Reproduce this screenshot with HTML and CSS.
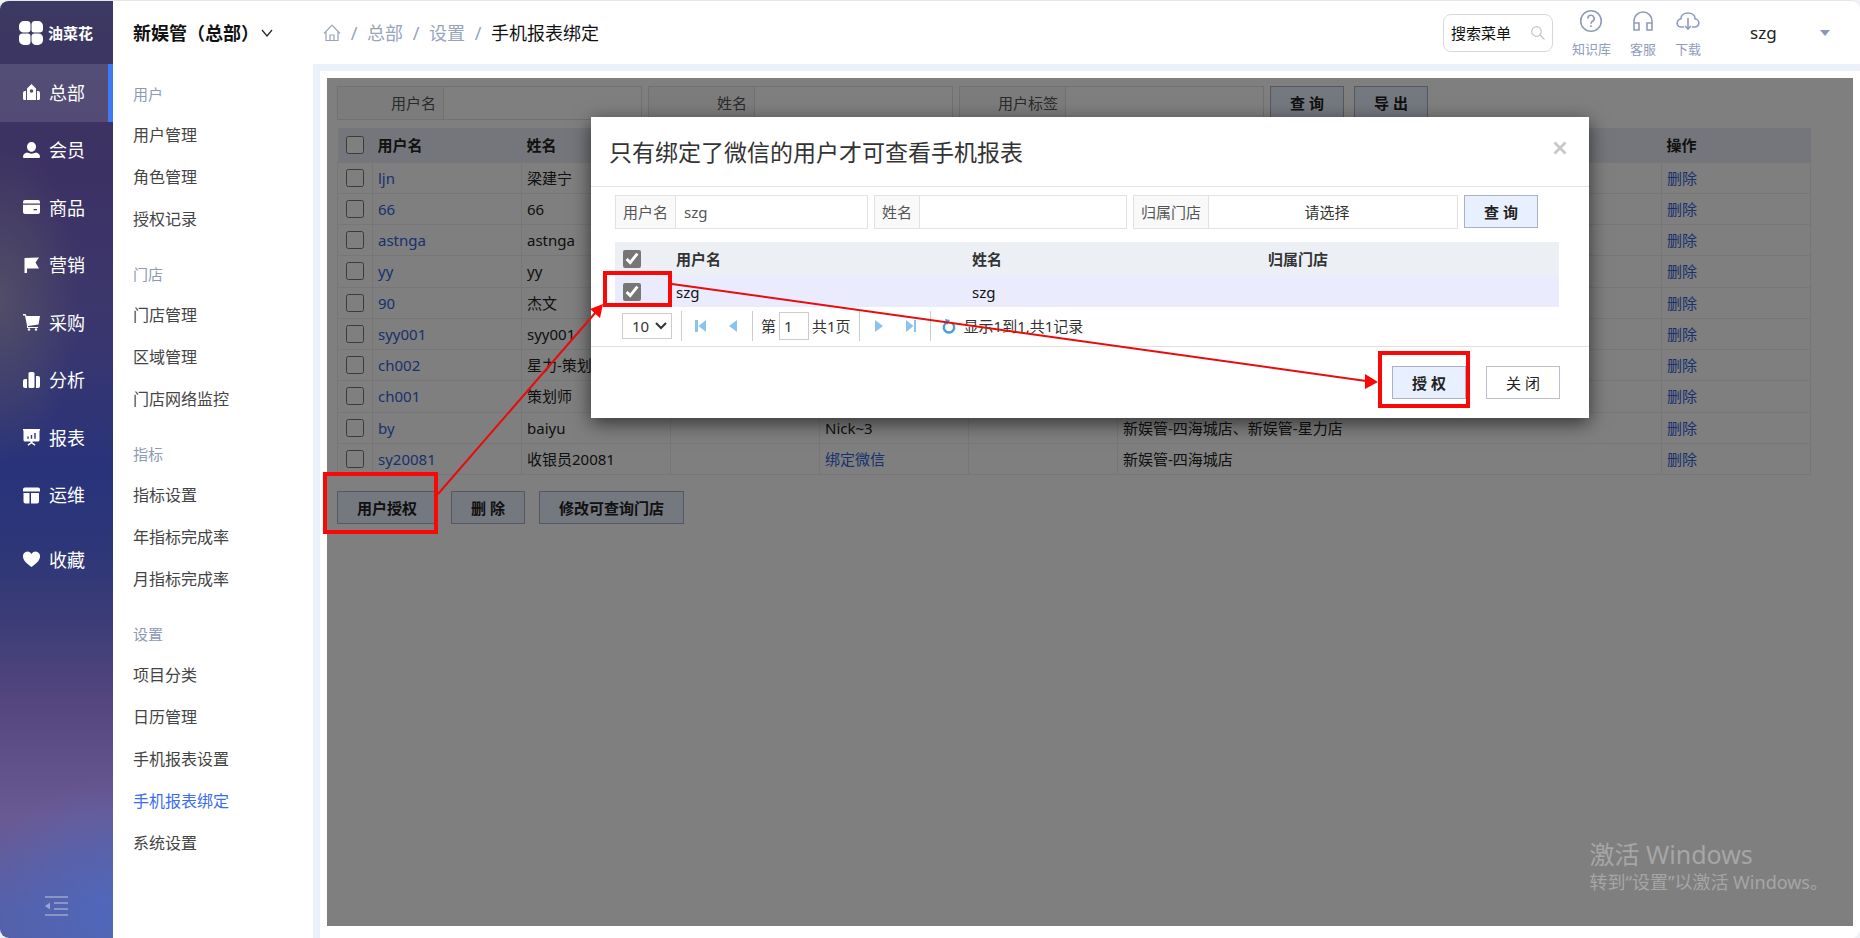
FILE: index.html
```html
<!DOCTYPE html>
<html lang="zh-CN">
<head>
<meta charset="utf-8">
<title>手机报表绑定</title>
<link rel="stylesheet" href="styles.css">
</head>
<body>
<div class="app">
  <aside class="rail">
    <div class="brand">
      <svg width="24" height="24" viewBox="0 0 24 24" fill="#fff"><path d="M5 0h4a3 3 0 0 1 2.500 3v5.500a3 3 0 0 1-3 3H4.500A4.500 4.500 0 0 1 0 7V5a5 5 0 0 1 5-5z"/><path d="M16 0h3a5 5 0 0 1 5 5v3a3.500 3.500 0 0 1-3.500 3.500H15a2.500 2.500 0 0 1-2.500-2.500V3.500A3.500 3.500 0 0 1 16 0z"/><path d="M3.500 12.500H9a2.500 2.500 0 0 1 2.500 2.500v5.500A3.500 3.500 0 0 1 8 24H5a5 5 0 0 1-5-5v-3a3.500 3.500 0 0 1 3.500-3.500z"/><path d="M15.500 12.500h4A4.500 4.500 0 0 1 24 17v2a5 5 0 0 1-5 5h-2a4.500 4.500 0 0 1-4.500-4.500v-4a3 3 0 0 1 3-3z"/></svg>
      <span>油菜花</span>
    </div>
    <nav class="rail-nav">
      <a class="rail-item active" href="#"><svg width="17" height="17" viewBox="0 0 17 17" fill="#fff"><path fill-rule="evenodd" d="M8.500 0 13 4.500V16H4V4.500zM8.500 5.200a1.800 1.800 0 1 0 0 3.600 1.800 1.800 0 0 0 0-3.600z"/><path d="M3 7v9H1.500A1.500 1.500 0 0 1 0 14.500V9a2 2 0 0 1 2-2zM14 7v9h1.500a1.500 1.500 0 0 0 1.500-1.500V9a2 2 0 0 0-2-2z"/></svg>总部</a>
      <a class="rail-item" href="#"><svg width="17" height="17" viewBox="0 0 17 17" fill="#fff"><path d="M8.500 0a4.500 4.500 0 0 1 4.500 4.800c0 2.500-1.800 5-4.500 5S4 7.300 4 4.800A4.500 4.500 0 0 1 8.500 0zM4 10.500c2.500 1.500 6.500 1.500 9 0 3 .8 4 2.500 4 4.500a1 1 0 0 1-1 1H1a1 1 0 0 1-1-1c0-2 1-3.700 4-4.500z"/></svg>会员</a>
      <a class="rail-item" href="#"><svg width="17" height="17" viewBox="0 0 17 17" fill="#fff"><path d="M2 1h13a2 2 0 0 1 2 2v1.500H0V3a2 2 0 0 1 2-2z"/><path fill-rule="evenodd" d="M0 5.700h17V13a2 2 0 0 1-2 2H2a2 2 0 0 1-2-2zM10.500 10v1.300h3.500V10z"/></svg>商品</a>
      <a class="rail-item" href="#"><svg width="17" height="17" viewBox="0 0 17 17" fill="#fff"><path d="M1.500 1 16 .5 12.500 5.500 16 11.500H4V16H1.500z"/></svg>营销</a>
      <a class="rail-item" href="#"><svg width="17" height="17" viewBox="0 0 17 17" fill="#fff"><path d="M0 0h2.500l1 2H17l-1.500 8.500L5 12v1h10v1H4v-2.500L2 1.500H0z"/><circle cx="6" cy="15.500" r="1.200"/><circle cx="13" cy="15.500" r="1.200"/></svg>采购</a>
      <a class="rail-item" href="#"><svg width="17" height="17" viewBox="0 0 17 17" fill="#fff"><path d="M4 7v9H2a2 2 0 0 1-2-2V9a2 2 0 0 1 2-2z"/><rect x="5.500" y="0" width="6" height="16" rx="1.500"/><path d="M13 4h2a2 2 0 0 1 2 2v8a2 2 0 0 1-2 2h-2z"/></svg>分析</a>
      <a class="rail-item" href="#"><svg width="17" height="17" viewBox="0 0 17 17" fill="#fff"><path fill-rule="evenodd" d="M0 0h17v1.500h-.5V11a1.500 1.500 0 0 1-1.500 1.500H2A1.500 1.500 0 0 1 .5 11V1.500H0zM4.300 7.500V9.700h1.400V7.500zM7.800 6v3.700h1.400V6zM11.300 4v5.700h1.400V4z"/><path d="M7.500 12h2v1.500l3 2-.8 1.200-3.200-2.200-3.200 2.200-.8-1.200 3-2z"/></svg>报表</a>
      <a class="rail-item" href="#"><svg width="17" height="17" viewBox="0 0 17 17" fill="#fff"><path d="M2 .5h13a2 2 0 0 1 2 2V4.500H0v-2a2 2 0 0 1 2-2zM.5 6H6.500v10.500h-4a2 2 0 0 1-2-2zM8 6h8v8.500a2 2 0 0 1-2 2H8z"/></svg>运维</a>
    </nav>
    <a class="rail-item rail-fav" href="#"><svg width="17" height="17" viewBox="0 0 17 17" fill="#fff"><path d="M8.500 16C4 12.500 0 9.500 0 5.500A4.700 4.700 0 0 1 4.500.5c1.700 0 3.200 1 4 2.500.8-1.500 2.300-2.500 4-2.500a4.700 4.700 0 0 1 4.500 5c0 4-4 7-8.500 10.500z"/></svg>收藏</a>
    <button class="collapse" type="button" aria-label="收起菜单"><svg width="23" height="20" viewBox="0 0 23 20" stroke="#9ea5cb" stroke-width="1.600" fill="none"><path d="M0 1h23M9 7h14M9 13h14M0 19h23"/><path d="M0 10 5 6.500v7z" fill="#9ea5cb" stroke="none"/></svg></button>
  </aside>

  <div class="shell">
    <header class="topbar">
      <button class="company" type="button">新娱管（总部）<svg width="12" height="8" viewBox="0 0 12 8" fill="none" stroke="#222" stroke-width="1.200"><path d="M1 1l5 6 5-6"/></svg></button>
      <nav class="crumbs">
        <a href="#" aria-label="首页"><svg width="18" height="18" viewBox="0 0 18 18" fill="none" stroke="#97a4bd" stroke-width="1.200"><path d="M1 9.500 9 1.200l8 8.300M3 8v8.500h12V8M7 16v-5h4v5" stroke-linejoin="round"/></svg></a>
        <i>/</i><a href="#">总部</a><i>/</i><a href="#">设置</a><i>/</i><b>手机报表绑定</b>
      </nav>
      <label class="search"><input type="text" value="搜索菜单" aria-label="搜索菜单"><svg width="14" height="14" viewBox="0 0 14 14" fill="none" stroke="#bfc3cb" stroke-width="1.200"><circle cx="5.500" cy="5.500" r="4.800"/><path d="M9 9l4.500 4.500"/></svg></label>
      <div class="tools">
        <a href="#"><svg width="24" height="24" viewBox="0 0 24 24" fill="none" stroke="#8f9cba" stroke-width="1.600"><circle cx="12" cy="12" r="10.300"/><path d="M8.800 9.500a3.200 3.200 0 1 1 4.700 2.800c-1 .6-1.500 1.100-1.500 2.400M12 16.200v1.800"/></svg>知识库</a>
        <a href="#"><svg width="24" height="24" viewBox="0 0 24 24" fill="none" stroke="#8f9cba" stroke-width="1.600"><path d="M3 21V12a9 9 0 0 1 18 0v9M3 14h5v7H3zM16 14h5v7h-5z"/></svg>客服</a>
        <a href="#"><svg width="24" height="24" viewBox="0 0 24 24" fill="none" stroke="#8f9cba" stroke-width="1.600"><path d="M8 18H5.500a4 4 0 0 1-.7-8C5 6 8.500 4 12 4s7 2 7.200 6a4 4 0 0 1-.7 8H16M12 9v11M9 17l3 3 3-3"/></svg>下载</a>
      </div>
      <button class="user" type="button">szg<svg width="10" height="6" viewBox="0 0 10 6" fill="#8a97bd"><path d="M0 0h10L5 6z"/></svg></button>
    </header>

    <div class="body">
      <nav class="submenu">
        <section><h2>用户</h2><a href="#">用户管理</a><a href="#">角色管理</a><a href="#">授权记录</a></section>
        <section><h2>门店</h2><a href="#">门店管理</a><a href="#">区域管理</a><a href="#">门店网络监控</a></section>
        <section><h2>指标</h2><a href="#">指标设置</a><a href="#">年指标完成率</a><a href="#">月指标完成率</a></section>
        <section><h2>设置</h2><a href="#">项目分类</a><a href="#">日历管理</a><a href="#">手机报表设置</a><a class="current" href="#">手机报表绑定</a><a href="#">系统设置</a></section>
      </nav>

      <main class="content">
        <div class="panel">
          <form class="filters">
            <div class="field wide"><label for="f-user">用户名</label><input id="f-user" type="text"></div>
            <div class="field wide"><label for="f-name">姓名</label><input id="f-name" type="text"></div>
            <div class="field wide"><label for="f-tag">用户标签</label><input id="f-tag" type="text"></div>
            <button class="btn primary" type="button">查 询</button>
            <button class="btn primary spaced" type="button">导 出</button>
          </form>
          <table class="grid users">
            <colgroup><col class="c-check"><col class="c-std"><col class="c-std"><col class="c-std"><col class="c-std"><col class="c-std"><col><col class="c-std"></colgroup>
            <thead><tr><th><input type="checkbox" aria-label="全选"></th><th>用户名</th><th>姓名</th><th></th><th></th><th></th><th></th><th>操作</th></tr></thead>
            <tbody>
              <tr><td><input type="checkbox" aria-label="ljn"></td><td><a href="#">ljn</a></td><td>梁建宁</td><td></td><td></td><td></td><td></td><td><a href="#">删除</a></td></tr>
              <tr><td><input type="checkbox" aria-label="66"></td><td><a href="#">66</a></td><td>66</td><td></td><td></td><td></td><td></td><td><a href="#">删除</a></td></tr>
              <tr><td><input type="checkbox" aria-label="astnga"></td><td><a href="#">astnga</a></td><td>astnga</td><td></td><td></td><td></td><td></td><td><a href="#">删除</a></td></tr>
              <tr><td><input type="checkbox" aria-label="yy"></td><td><a href="#">yy</a></td><td>yy</td><td></td><td></td><td></td><td></td><td><a href="#">删除</a></td></tr>
              <tr><td><input type="checkbox" aria-label="90"></td><td><a href="#">90</a></td><td>杰文</td><td></td><td></td><td></td><td></td><td><a href="#">删除</a></td></tr>
              <tr><td><input type="checkbox" aria-label="syy001"></td><td><a href="#">syy001</a></td><td>syy001</td><td></td><td></td><td></td><td></td><td><a href="#">删除</a></td></tr>
              <tr><td><input type="checkbox" aria-label="ch002"></td><td><a href="#">ch002</a></td><td>星力-策划</td><td></td><td></td><td></td><td></td><td><a href="#">删除</a></td></tr>
              <tr><td><input type="checkbox" aria-label="ch001"></td><td><a href="#">ch001</a></td><td>策划师</td><td></td><td></td><td></td><td></td><td><a href="#">删除</a></td></tr>
              <tr><td><input type="checkbox" aria-label="by"></td><td><a href="#">by</a></td><td>baiyu</td><td></td><td>Nick~3</td><td></td><td>新娱管-四海城店、新娱管-星力店</td><td><a href="#">删除</a></td></tr>
              <tr><td><input type="checkbox" aria-label="sy20081"></td><td><a href="#">sy20081</a></td><td>收银员20081</td><td></td><td><a href="#">绑定微信</a></td><td></td><td>新娱管-四海城店</td><td><a href="#">删除</a></td></tr>
            </tbody>
          </table>
          <div class="actions">
            <button class="btn primary" type="button">用户授权</button>
            <button class="btn primary" type="button">删 除</button>
            <button class="btn primary" type="button">修改可查询门店</button>
          </div>

          <div class="overlay">
            <div class="modal" role="dialog" aria-labelledby="dlg-title">
              <div class="modal-head">
                <h1 id="dlg-title">只有绑定了微信的用户才可查看手机报表</h1>
                <button class="close" type="button" aria-label="关闭"><svg width="14" height="14" viewBox="0 0 14 14" stroke="#c6c6c6" stroke-width="2.600"><path d="M1.500 1.500l11 11M12.500 1.500l-11 11"/></svg></button>
              </div>
              <div class="modal-body">
                <form class="filters">
                  <div class="field f-a"><label for="m-user">用户名</label><input id="m-user" type="text" value="szg"></div>
                  <div class="field f-b"><label for="m-name">姓名</label><input id="m-name" type="text"></div>
                  <div class="field f-c"><label for="m-shop">归属门店</label><select id="m-shop"><option>请选择</option></select></div>
                  <button class="btn primary" type="button">查 询</button>
                </form>
                <table class="grid picks">
                  <colgroup><col class="p-check"><col><col><col></colgroup>
                  <thead><tr><th><input type="checkbox" checked aria-label="全选"></th><th>用户名</th><th>姓名</th><th>归属门店</th></tr></thead>
                  <tbody><tr><td><input type="checkbox" checked aria-label="szg"></td><td>szg</td><td>szg</td><td></td></tr></tbody>
                </table>
                <div class="pager">
                  <span class="size"><select aria-label="每页条数"><option>10</option></select><svg width="12" height="8" viewBox="0 0 12 8" fill="none" stroke="#333" stroke-width="2"><path d="M1 1l5 5 5-5"/></svg></span>
                  <span class="cell"><button type="button" aria-label="首页"><svg width="12" height="12" viewBox="0 0 12 12" fill="#8cc3ee"><path d="M0 0h3v12H0zM11 0v12L3.500 6z"/></svg></button><button type="button" aria-label="上一页"><svg width="12" height="12" viewBox="0 0 12 12" fill="#8cc3ee"><path d="M10 0v12L2 6z"/></svg></button></span>
                  <span class="cell page"><label for="m-page">第</label><input id="m-page" type="text" value="1"><span>共1页</span></span>
                  <span class="cell"><button type="button" aria-label="下一页"><svg width="12" height="12" viewBox="0 0 12 12" fill="#8cc3ee"><path d="M2 0v12l8-6z"/></svg></button><button type="button" aria-label="末页"><svg width="12" height="12" viewBox="0 0 12 12" fill="#8cc3ee"><path d="M9 0h2v12H9zM1 0v12l7.500-6z"/></svg></button></span>
                  <span class="cell info"><button type="button" aria-label="刷新"><svg width="14" height="15" viewBox="0 0 14 15"><path d="M9 3.500a5.200 5.200 0 1 1-4 0" fill="none" stroke="#4a9fdc" stroke-width="2.400"/><path d="M3 0l5 1-3 5z" fill="#4a9fdc"/></svg></button><span>显示1到1,共1记录</span></span>
                </div>
              </div>
              <div class="modal-foot">
                <button class="btn primary" type="button">授 权</button>
                <button class="btn" type="button">关 闭</button>
              </div>
            </div>
          </div>
          <div class="watermark"><p>激活 Windows</p><p>转到“设置”以激活 Windows。</p></div>
        </div>
      </main>
    </div>
  </div>

  <svg class="marks" width="1860" height="938" viewBox="0 0 1860 938" fill="none">
    <g stroke="#f90808" stroke-width="4"><rect x="325" y="474" width="111" height="58"/><rect x="605" y="273" width="65" height="32"/><rect x="1380" y="353" width="88" height="53"/></g>
    <g stroke="#e80c0c" stroke-width="2"><path d="M438 494 596 312M672 284 1366 381"/></g>
    <g fill="#f90808"><path d="M603 304 590 309 600 318zM1378 382 1365 374V389z"/></g>
  </svg>
</div>
</body>
</html>
```
FILE: styles.css
```css
* { box-sizing: border-box; }
body {
  margin: 0;
  background: #f0f1f4;
  color: #333;
  font: 15px/20px "Noto Sans", "Noto Sans CJK SC", sans-serif;
}
a { color: inherit; text-decoration: none; }
h1, h2, p { margin: 0; font-weight: 400; }
button, input, select { font: inherit; color: inherit; margin: 0; }
button { padding: 0; border: 0; background: none; cursor: pointer; }
svg { display: block; flex: none; }

.app {
  position: relative;
  display: flex;
  min-height: 100vh;
  border-top: 1px solid #e4e6ea;
  border-radius: 9px;
  overflow: hidden;
  background: #fff;
}

/* Left rail */
.rail {
  display: flex;
  flex-direction: column;
  width: 113px;
  flex: none;
  color: #fff;
  background:
    radial-gradient(circle at 100% 97%, rgba(78, 105, 190, .8), transparent 130px),
    radial-gradient(ellipse 80px 160px at 0 32%, rgba(96, 92, 100, .6), transparent),
    linear-gradient(180deg, #3c3962 0, #3c3163 18%, #3c376c 33%, #29337a 50%, #2c3678 58%, #3b3c76 66%, #55467f 75%, #6a5a94 87%, #5560a8 97%);
}
.brand {
  display: flex;
  align-items: center;
  gap: 5px;
  height: 63px;
  padding-left: 19px;
  font-size: 15px;
  font-weight: 700;
}
.rail-nav { display: grid; grid-auto-rows: 1fr; height: 460px; }
.rail-item {
  display: flex;
  align-items: center;
  gap: 9px;
  padding-left: 23px;
  font-size: 18px;
}
.rail-item.active {
  background: rgba(255, 255, 255, .12);
  border-right: 5px solid #3f7af5;
}
.rail-fav { height: 57px; margin-top: 7px; }
.collapse { margin: auto auto 22px 45px; }

/* Header */
.shell { flex: 1; min-width: 0; display: flex; flex-direction: column; }
.topbar { display: flex; align-items: center; height: 63px; flex: none; padding: 0 30px 0 20px; }
.company {
  display: flex;
  align-items: center;
  gap: 2px;
  width: 190px;
  color: #111;
  font-size: 18px;
  font-weight: 700;
  white-space: nowrap;
}
.crumbs { display: flex; align-items: center; gap: 9px; color: #97a4bd; font-size: 18px; }
.crumbs i { width: 8px; font-style: normal; text-align: center; }
.crumbs b { color: #111; font-weight: 400; }
.search {
  display: flex;
  align-items: center;
  width: 110px;
  height: 38px;
  margin-left: auto;
  padding: 0 7px;
  border: 1px solid #d5d8de;
  border-radius: 8px;
}
.search input { flex: 1; min-width: 0; padding: 0; border: 0; outline: 0; background: none; color: #111; }
.tools { display: flex; gap: 19px; margin-left: 19px; color: #8f9cba; font-size: 13px; line-height: 18px; }
.tools a { display: flex; flex-direction: column; align-items: center; gap: 7px; padding-top: 1px; }
.user {
  display: flex;
  align-items: center;
  justify-content: space-between;
  width: 80px;
  margin-left: 49px;
  color: #222;
  font-size: 17px;
}

/* Secondary menu */
.body { flex: 1; display: flex; min-height: 0; }
.submenu { width: 200px; flex: none; padding: 0 20px; }
.submenu section { margin-bottom: 4px; }
.submenu h2 { height: 50px; padding-top: 22px; line-height: 16px; font-size: 15px; color: #8d9ab4; }
.submenu a { display: block; line-height: 42px; font-size: 16px; color: #444; }
.submenu .current { color: #3a6df0; }

/* Content */
.content { flex: 1; min-width: 0; display: flex; padding: 7px 0 0 7px; background: #ecf0fa; }
.panel {
  position: relative;
  flex: 1;
  min-width: 0;
  padding: 15px 49px 0 17px;
  background: #fff;
}
.filters { display: flex; align-items: flex-start; gap: 6px; }
.field { display: flex; height: 34px; border: 1px solid #e2e2e2; color: #555; }
.field label { flex: none; padding: 0 7px; background: #f9f9f9; border-right: 1px solid #e2e2e2; line-height: 32px; text-align: right; }
.field input, .field select { flex: 1; min-width: 0; padding: 0 8px; border: 0; outline: 0; background: #fff; }
.field select { appearance: none; padding-right: 20px; color: #333; text-align-last: center; }
.field.wide { width: 305px; }
.field.wide label { width: 106px; }
.field.f-a { width: 253px; }
.field.f-b { width: 253px; }
.field.f-c { width: 325px; }
.btn {
  height: 33px;
  padding: 0 19px;
  min-width: 74px;
  border: 1px solid #b9c0cc;
  background: #fff;
  color: #222;
  white-space: nowrap;
}
.btn.primary { background: #e8f0ff; border-color: #a9b1c2; font-weight: 700; }
.btn.spaced { margin-left: 4px; }

.grid { width: 100%; border-collapse: collapse; table-layout: fixed; }
.grid th, .grid td { padding: 0 5px; text-align: left; white-space: nowrap; }
.grid th { height: 34px; background: #ecf0f5; font-weight: 700; }
.grid td { height: 31px; }
.grid input { display: block; width: 18px; height: 18px; accent-color: #767676; }
.users { margin-top: 8px; height: 347px; color: #222; }
.users th { background: #e8edf6; }
.users td { border: 1px solid #efefef; }
.users a { color: #3263d8; }
.users input { margin-left: 3px; }
.c-check { width: 35px; }
.c-std { width: 149px; }
.actions { display: flex; gap: 14px; margin-top: 16px; }

/* Dialog */
.overlay {
  position: absolute;
  inset: 7px 7px 12px 7px;
  display: flex;
  justify-content: center;
  align-items: flex-start;
  padding-top: 39px;
  background: rgba(0, 0, 0, .5);
}
.modal { width: 998px; max-width: 100%; background: #fff; box-shadow: 0 5px 18px rgba(0, 0, 0, .6); }
.modal-head {
  display: flex;
  align-items: center;
  justify-content: space-between;
  height: 70px;
  padding: 0 22px 0 18px;
  border-bottom: 1px solid #e3e3e3;
}
.modal-head h1 { font-size: 23px; line-height: 32px; }
.close { margin-bottom: 8px; }
.modal-body { padding: 8px 30px 0 24px; border-bottom: 1px solid #e0e0e0; }
.picks { margin-top: 13px; }
.picks tbody { background: #eaebfd; color: #111; }
.picks input { margin-left: 3px; }
.p-check { width: 56px; }
.pager { display: flex; align-items: center; height: 39px; padding: 0 0 1px 7px; }
.size { display: grid; align-items: center; width: 50px; height: 26px; margin-right: 9px; border: 1px solid #ccc; }
.size select, .size svg { grid-area: 1 / 1; }
.size select { appearance: none; width: 100%; height: 24px; padding: 0 0 0 9px; border: 0; background: none; }
.size svg { justify-self: end; margin-right: 4px; }
.cell { display: flex; align-items: center; gap: 20px; height: 30px; padding: 0 13px; border-left: 1px solid #ccc; }
.cell.page { gap: 3px; padding: 0 8px; }
.cell.page input { width: 30px; height: 28px; padding: 0 4px; border: 1px solid #ccc; }
.cell.info { gap: 8px; padding: 0 11px; }
.modal-foot { display: flex; justify-content: flex-end; gap: 20px; padding: 19px 29px; }

.watermark { position: absolute; right: 32px; bottom: 42px; color: #a6a6a6; font-size: 18px; line-height: 28px; }
.watermark p:first-child { font-size: 25px; }

.marks { position: absolute; left: 0; top: -1px; pointer-events: none; }
```
